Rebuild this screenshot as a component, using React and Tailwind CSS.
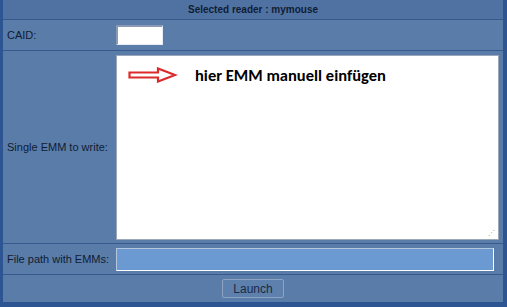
import React from 'react';

function Arrow() {
  return (
    <svg width="50" height="16" viewBox="0 0 50 16" className="shrink-0">
      <path
        d="M1.5 5.5 H30 V1.5 L47 8 L30 14.5 V10.5 H1.5 Z"
        fill="none"
        stroke="#dc2b2b"
        strokeWidth="2.2"
        strokeLinejoin="miter"
      />
    </svg>
  );
}

function Row({ label, children, className = '' }) {
  return (
    <div className={`flex items-center border-b border-[#36598f] ${className}`}>
      <div className="w-[113px] shrink-0 pl-[4px] text-[11px] whitespace-nowrap text-[#0f1d33]">{label}</div>
      <div className="flex-1 pr-[4px]">{children}</div>
    </div>
  );
}

export default function App() {
  return (
    <div
      className="w-[507px] h-[307px] bg-[#2d5592] pl-[3px] pr-[4px] pb-[5px]"
      style={{ fontFamily: '"Liberation Sans", Arial, sans-serif' }}
    >
      <div className="h-full bg-[#5a7ca9] flex flex-col">
        <div className="h-[20px] bg-[#5072a3] border-b border-[#36598f] flex items-center justify-center text-[10px] font-bold text-[#0f1d33]">
          Selected reader : mymouse
        </div>
        <Row label="CAID:" className="h-[31px]">
          <div className="w-[47px] h-[20px] bg-white border border-[#8a9ab4] border-r-[#e6ecf5] border-b-[#e6ecf5] border-t-2 border-l-2" />
        </Row>
        <Row label="Single EMM to write:" className="h-[193px]">
          <div className="relative h-[185px] bg-white border border-[#9aa7bb]">
            <div className="flex items-center pl-[11px] pt-[7px]">
              <Arrow />
              <span
                className="ml-[17px] text-[16.5px] font-bold text-black"
                style={{ fontFamily: 'Carlito, "Open Sans", "Liberation Sans", sans-serif' }}
              >
                hier EMM manuell einfügen
              </span>
            </div>
            <div className="absolute right-[3px] bottom-[3px] text-[7px] leading-none text-[#a0a0a0]">⋰</div>
          </div>
        </Row>
        <Row label="File path with EMMs:" className="h-[31px]">
          <div className="w-[378px] h-[23px] bg-[#6b99d1] border border-[#b4c6de] border-r-white border-b-white" />
        </Row>
        <div className="flex-1 flex items-center justify-center">
          <button className="w-[62px] h-[19px] bg-[#5e80ac] border border-[#8ea3c2] rounded-[2px] text-[12px] text-[#1b2a44] leading-none">
            Launch
          </button>
        </div>
      </div>
    </div>
  );
}
